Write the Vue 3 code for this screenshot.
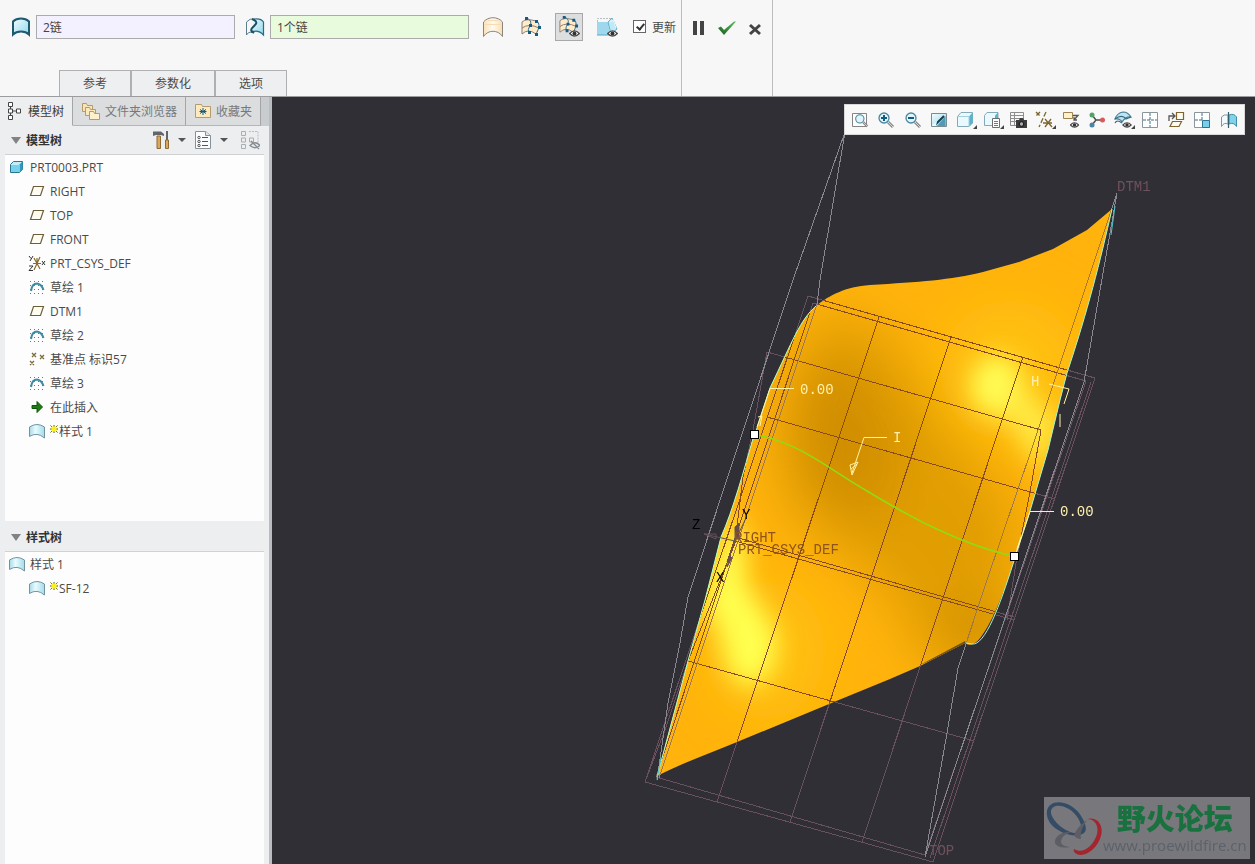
<template>
  <div class="app">
    <!-- Icon definitions -->
    <svg class="defs" width="0" height="0" aria-hidden="true">
      <defs>
        <linearGradient id="g-cyan" x1="0" y1="0" x2="1" y2="1">
          <stop offset="0" stop-color="#f4fdff" />
          <stop offset="1" stop-color="#8fd8ec" />
        </linearGradient>
        <linearGradient id="g-shell" x1="0" y1="0" x2="1" y2="0">
          <stop offset="0" stop-color="#a9d9e6" />
          <stop offset="0.4" stop-color="#e8fbff" />
          <stop offset="1" stop-color="#a5dcea" />
        </linearGradient>
        <linearGradient id="g-cream" x1="0" y1="0" x2="1" y2="0">
          <stop offset="0" stop-color="#fbe2b8" />
          <stop offset="0.5" stop-color="#fffaf0" />
          <stop offset="1" stop-color="#f9ddb0" />
        </linearGradient>
        <linearGradient id="g-check" x1="0" y1="1" x2="1" y2="0">
          <stop offset="0" stop-color="#1d5b24" />
          <stop offset="1" stop-color="#5ec05c" />
        </linearGradient>
      </defs>

      <symbol id="i-surface" viewBox="0 0 20 20">
        <path d="M2 17.500V4.500C6 .6 14 .6 18 4.500V17.500C14 13.500 6 13.500 2 17.500Z" fill="url(#g-cyan)" stroke="#1c5a70" stroke-width="2" />
      </symbol>
      <symbol id="i-inner" viewBox="0 0 20 20">
        <path d="M9 2Q15 1 18 5V18Q13 13 6 16Z" fill="url(#g-cyan)" />
        <path d="M1.500 18V5Q5 1 9 2M1.500 18Q3 15 6 15" fill="none" stroke="#5c7e8c" />
        <path d="M9 2Q16 1 18.500 5V18Q13 12 6 15.500" fill="none" stroke="#2b6b82" stroke-width="1.200" />
        <path d="M7 2C15 5 10 8 8 10C5 13 6 14 9 16" fill="none" stroke="#1c4f63" stroke-width="2" />
      </symbol>
      <symbol id="i-cream" viewBox="0 0 22 22">
        <path d="M1.500 20.500V6C6 .3 16 .3 20.500 6V20.500C16 13.500 6 13.500 1.500 20.500Z" fill="url(#g-cream)" stroke="#8b8580" />
        <path d="M6 4.500H16M3 8.500H19" stroke="#f6dcb4" />
      </symbol>
      <symbol id="i-net" viewBox="0 0 22 22">
        <path d="M2 18V6Q7 2 17 6L20 12L16 18Q9 12 2 18Z" fill="#fdebc9" />
        <path d="M2 18V6Q6 2 16 5M2 12Q9 7 19 12M2 18Q8 12 16 18" fill="none" stroke="#8b7f72" />
        <path d="M7 2C12 5 11 7 10 10C8 13 8 14 9 17M17 5C21 9 18 14 16 18" fill="none" stroke="#2d6a88" />
        <path d="M5 1h3v3h-3zM9 8h3v3h-3zM8 15h3v3h-3zM15 4h3v3h-3zM18 10h3v3h-3zM15 17h3v3h-3z" fill="#175a80" />
      </symbol>
      <symbol id="i-eye" viewBox="0 0 12 8">
        <path d="M.5 4Q6-2 11.500 4Q6 10 .5 4Z" fill="#fff" stroke="#484848" stroke-width="1.500" />
        <circle cx="6" cy="4" r="2.300" fill="#333" />
      </symbol>
      <symbol id="i-neteye" viewBox="0 0 22 22">
        <use href="#i-net" x="0" y="-1" width="21" height="21" />
        <use href="#i-eye" x="11" y="14" width="11" height="7" />
      </symbol>
      <symbol id="i-blend" viewBox="0 0 22 22">
        <path d="M1 6H12L14 19H1Z" fill="#9fd8ec" />
        <path d="M1.500 6V2.500H15" fill="none" stroke="#b9bec4" stroke-dasharray="2 1" />
        <path d="M12 6L16 2L21 13L15 18Z" fill="#bfe9f6" stroke="#5fb0cb" />
        <path d="M14 6L17 4L20 12" fill="none" stroke="#f2fcff" />
        <path d="M1 19H14" stroke="#5ba9c2" />
        <use href="#i-eye" x="11" y="14" width="11" height="7" />
      </symbol>
      <symbol id="i-tree" viewBox="0 0 16 20">
        <path d="M4.500 6v8M6 10h5" stroke="#444" fill="none" />
        <path d="M2.500 1.500h4v4h-4zM2.500 8h4v4h-4zM2.500 14.500h4v4h-4zM10.500 8h4v4h-4z" fill="#fff" stroke="#444" />
      </symbol>
      <symbol id="i-folders" viewBox="0 0 20 20">
        <path d="M1.500 2.500h4l1 2h5v6h-10z" fill="#f9e3b2" stroke="#b39b6c" />
        <path d="M4.500 6.500h4l1 2h5v6h-10z" fill="#fbe8bd" stroke="#b39b6c" />
        <path d="M8.500 10.500h4l1 2h5v6h-10z" fill="#fff1cd" stroke="#b39b6c" />
      </symbol>
      <symbol id="i-fav" viewBox="0 0 18 18">
        <path d="M1.500 2.500h6l1 2h8v11h-15z" fill="#fdeabf" stroke="#b39b6c" />
        <path d="M9 6v7M6 7.500l6 4M12 7.500l-6 4M5.500 9.500h7" stroke="#1c5a78" />
      </symbol>
      <symbol id="i-tools" viewBox="0 0 18 20">
        <path d="M5 6h3.500v12.500h-3.500z" fill="#d9a85d" stroke="#8c6b35" />
        <path d="M1 6V1.500H9L12 4V6L9 5H4Z" fill="#62666b" />
        <path d="M15 1v9" stroke="#62666b" stroke-width="2" />
        <path d="M13.500 10h3v8.500h-3z" fill="#d9a85d" stroke="#8c6b35" />
      </symbol>
      <symbol id="i-list" viewBox="0 0 18 20">
        <path d="M1.500 1.500h10l5 4v13h-15z" fill="#fcfdfe" stroke="#87919a" />
        <path d="M11.500 1.500v4h5" fill="#dfe5ea" stroke="#87919a" />
        <path d="M8 7.500h6M8 11.500h6M8 15.500h6" stroke="#555" />
        <circle cx="5" cy="7.500" r="1.200" fill="none" stroke="#555" />
        <circle cx="5" cy="11.500" r="1.200" fill="none" stroke="#555" />
        <circle cx="5" cy="15.500" r="1.200" fill="none" stroke="#555" />
      </symbol>
      <symbol id="i-hide" viewBox="0 0 20 20">
        <path d="M1.500 1.500h4v4h-4zM1.500 8h4v4h-4zM1.500 14.500h4v4h-4zM9.500 8h4v4h-4z" fill="none" stroke="#a9aeb2" />
        <path d="M9 1.500h9v12" fill="none" stroke="#b8bdc1" stroke-dasharray="2 1" />
        <path d="M10 15.500Q15 10 20 15.500Q15 20 10 15.500ZM11 11l8 8" fill="none" stroke="#878d92" stroke-width="1.300" />
      </symbol>
      <symbol id="i-part" viewBox="0 0 16 16">
        <path d="M1.500 5.500L4.500 2.500H13.500V10.500L10.500 13.500H1.500Z" fill="#c3eef9" stroke="#2a7690" />
        <path d="M10.500 5.500L13.500 2.500V10.500L10.500 13.500Z" fill="#2f9cbc" />
        <path d="M2 6h8.500v7h-8.500z" fill="#76d2ec" />
      </symbol>
      <symbol id="i-plane" viewBox="0 0 16 16">
        <path d="M4.500 3.500H14.500L11.500 12.500H1.500Z" fill="#fffdf2" stroke="#6e5e3a" stroke-width="1.200" />
      </symbol>
      <symbol id="i-csys" viewBox="0 0 18 16">
        <path d="M5 8.500h8M6 3l6 11M12 2L6 15M9 3v5" stroke="#8a6d2c" stroke-width="1.200" fill="none" />
        <path d="M1 1l2 2.500M5 1L2 6M1 11h4L1 15.500h4M14 6l3 4M17 6l-3 4" stroke="#333" fill="none" />
      </symbol>
      <symbol id="i-sketch" viewBox="0 0 16 16">
        <path d="M1 2.500h15M1 6.500h15M1 10.500h15M1 14.500h15" stroke="#3c87ad" stroke-dasharray="1 3" />
        <path d="M2 12Q3 4.500 8 4.500Q12.500 5 14.500 11" fill="none" stroke="#3f8aa5" stroke-width="2" />
      </symbol>
      <symbol id="i-points" viewBox="0 0 16 16">
        <path d="M3 2l4 4M7 2l-4 4M11 4l4 4M15 4l-4 4M1 10l4 4M5 10l-4 4" stroke="#7b6a35" stroke-width="1.300" />
      </symbol>
      <symbol id="i-insert" viewBox="0 0 16 16">
        <path d="M3 6.500h5V2.500L13.500 8L8 13.500V9.500H3Z" fill="#1f7a14" stroke="#0e5608" />
      </symbol>
      <symbol id="i-style" viewBox="0 0 18 16">
        <path d="M1.500 13.500V4Q9-1 16.500 4V15Q9 8.500 1.500 13.500Z" fill="url(#g-shell)" stroke="#70949f" />
      </symbol>
      <symbol id="i-new" viewBox="0 0 8 8">
        <path d="M4 0v8M0 4h8M.5.5l7 7M7.500.5L.5 7.500" stroke="#55550a" />
        <path d="M1.500 1.500h5v5h-5z" fill="#fbf21c" />
      </symbol>

      <symbol id="i-lens" viewBox="0 0 18 18">
        <path d="M11 11l5 5" stroke="#888" stroke-width="3" />
        <path d="M11 11l5 5" stroke="#d9d9d9" stroke-width="1" />
        <circle cx="7" cy="7" r="5" fill="#dff5fb" stroke="#4a87a0" stroke-width="1.300" />
      </symbol>
      <symbol id="v-fit" viewBox="0 0 18 18">
        <path d="M1.500 2.500h14v13h-14z" fill="#fff" stroke="#848484" />
        <use href="#i-lens" x="3" y="2" width="15" height="15" />
      </symbol>
      <symbol id="v-in" viewBox="0 0 18 18">
        <use href="#i-lens" width="18" height="18" />
        <path d="M4 7h6M7 4v6" stroke="#15597c" stroke-width="2" />
      </symbol>
      <symbol id="v-out" viewBox="0 0 18 18">
        <use href="#i-lens" width="18" height="18" />
        <path d="M4 7h6" stroke="#15597c" stroke-width="2" />
      </symbol>
      <symbol id="v-repaint" viewBox="0 0 18 18">
        <path d="M1.500 2.500h15v13h-15z" fill="url(#g-cyan)" stroke="#7b8b92" />
        <path d="M7 15L15.500 5V15Z" fill="#4f9cb6" />
        <path d="M5 14L14 5" stroke="#123c50" stroke-width="2" />
        <path d="M2 14L7 10L6 15H2Z" fill="#e8f8fd" />
      </symbol>
      <symbol id="v-shade" viewBox="0 0 18 18">
        <path d="M1.500 5.500L5 1.500H16.500V12L13 15.500H1.500Z" fill="#e9f9fd" stroke="#83aab8" />
        <path d="M13 5.500L16.500 1.500V12L13 15.500Z" fill="#57b4cf" />
        <path d="M1.500 5.500H13V15.500" fill="none" stroke="#a5cfdb" />
      </symbol>
      <symbol id="v-saved" viewBox="0 0 18 18">
        <path d="M1.500 4.500L4 1.500H15V12L12 14.500H1.500Z" fill="#e9f9fd" stroke="#83aab8" />
        <path d="M12 4.500L15 1.500V8H12Z" fill="#57b4cf" />
        <path d="M9.500 7.500h7v9h-7z" fill="#fff" stroke="#6d6d6d" />
        <path d="M11 10.500h4M11 12.500h4M11 14.500h4" stroke="#777" />
      </symbol>
      <symbol id="v-camera" viewBox="0 0 18 18">
        <path d="M1.500 1.500h13v13h-13zM1.500 4.500h13M1.500 7.500h13M1.500 10.500h13M5.500 1.500v13" fill="none" stroke="#8d8d8d" />
        <path d="M7 9h3l1-2h3l1 2h3v8h-11z" fill="#3c3c3c" />
        <circle cx="12.500" cy="13" r="2.300" fill="#aaa" stroke="#111" />
      </symbol>
      <symbol id="v-datum" viewBox="0 0 18 18">
        <path d="M1 1l4 4M5 1l-4 4M11 1L4 16" fill="none" stroke="#7c652c" stroke-width="1.300" stroke-dasharray="5 2" />
        <path d="M10 8l7 8M16 8l-6 8M8 12h9" fill="none" stroke="#7c652c" stroke-width="1.300" />
      </symbol>
      <symbol id="v-note" viewBox="0 0 18 18">
        <path d="M1.500 1.500h9v6h-9z" fill="#fdf0cc" stroke="#9b8250" />
        <path d="M11 4.500h5L12 9M12 6v3h3" fill="none" stroke="#555" stroke-width="1.300" />
        <use href="#i-eye" x="8" y="11" width="9" height="6" />
      </symbol>
      <symbol id="v-spin" viewBox="0 0 18 18">
        <path d="M4 4l4 5L4 14M8 9h7" fill="none" stroke="#4d4d4d" stroke-width="1.500" />
        <circle cx="4" cy="4" r="2.500" fill="#53a166" />
        <circle cx="4" cy="14" r="2.500" fill="#4b83a3" />
        <circle cx="14.500" cy="9" r="2.500" fill="#d65c5c" />
      </symbol>
      <symbol id="v-style" viewBox="0 0 18 18">
        <path d="M1 8Q3 2 9 1Q14 1 17 6Q12 5 8 11Q6 7 1 8Z" fill="#bde5f1" stroke="#497f96" stroke-width="1.200" />
        <path d="M1 8Q8 3 12 8L17 6M1 12Q3 8 8 12" fill="none" stroke="#36657d" stroke-width="1.200" />
        <use href="#i-eye" x="8" y="11" width="10" height="6" />
      </symbol>
      <symbol id="v-four" viewBox="0 0 18 18">
        <path d="M1.500 1.500h15v15h-15z" fill="#fff" stroke="#8b969c" />
        <path d="M9 2v14M2 9h14" stroke="#35718e" stroke-dasharray="3 1" />
      </symbol>
      <symbol id="v-normal" viewBox="0 0 18 18">
        <path d="M9.500 1.500h7v7h-7zM5.500 10.500h9L12 15.500H3Z" fill="#fffbee" stroke="#80642f" stroke-width="1.200" />
        <path d="M2 10V5H7M5 2l3 3l-3 3" fill="none" stroke="#555" stroke-width="1.300" />
      </symbol>
      <symbol id="v-active" viewBox="0 0 18 18">
        <path d="M1.500 1.500h15v15h-15z" fill="#fff" stroke="#8b969c" />
        <path d="M9 2v7M2 9h7" stroke="#35718e" stroke-dasharray="3 1" />
        <path d="M9.500 9.500h7v7h-7z" fill="#78cfea" stroke="#2c7693" />
      </symbol>
      <symbol id="v-mirror" viewBox="0 0 18 18">
        <path d="M1.500 15.500V6Q4 3 8 4V13Q4 11 1.500 15.500Z" fill="#f1fafc" stroke="#83949b" />
        <path d="M9 4Q14 2 16.500 6V15.500Q14 11 9 13Z" fill="#7fd3eb" stroke="#438da8" />
        <path d="M8.500 1v16" stroke="#375e6d" stroke-width="1.200" />
      </symbol>
    </svg>

    <header class="dashboard">
      <section class="feature">
        <div class="controls">
          <svg class="ic20"><use href="#i-surface" /></svg>
          <input v-model="primary" class="collector" type="text" aria-label="主链" />
          <svg class="ic20 gap-lg"><use href="#i-inner" /></svg>
          <input v-model="internal" class="collector active" type="text" aria-label="内部链" />
          <div class="toggles">
            <button
              v-for="t in toggles"
              :key="t.icon"
              type="button"
              class="toggle"
              :class="{ on: t.on }"
              :aria-label="t.label"
              @click="t.on = !t.on"
            >
              <svg class="ic22"><use :href="'#' + t.icon" /></svg>
            </button>
          </div>
          <label class="update"><input v-model="update" type="checkbox" />更新</label>
        </div>
        <nav class="slide-tabs">
          <button v-for="s in slideUps" :key="s" type="button">{{ s }}</button>
        </nav>
      </section>
      <section class="confirm">
        <button type="button" aria-label="暂停">
          <svg width="14" height="16" viewBox="0 0 14 16"><path d="M1 1h4v14h-4zM8 1h4v14h-4z" fill="#444" /></svg>
        </button>
        <button type="button" aria-label="确定">
          <svg width="20" height="16" viewBox="0 0 20 16"><path d="M1 8L4 6.500L7 10L17 1.500H19L7 15Z" fill="url(#g-check)" /></svg>
        </button>
        <button type="button" aria-label="取消">
          <svg width="14" height="16" viewBox="0 0 14 16"><path d="M2 5L12 14M12 5L2 14" stroke="#444" stroke-width="3" /></svg>
        </button>
      </section>
    </header>

    <div class="workspace">
      <aside class="navigator">
        <nav class="nav-tabs">
          <button type="button" class="tab current"><svg class="tab-tree"><use href="#i-tree" /></svg>模型树</button>
          <button type="button" class="tab"><svg class="ic20"><use href="#i-folders" /></svg>文件夹浏览器</button>
          <button type="button" class="tab"><svg class="ic18"><use href="#i-fav" /></svg>收藏夹</button>
        </nav>
        <div class="panel">
          <div class="panel-title">
            <span class="arrow"></span>
            <h2>模型树</h2>
            <div class="panel-tools">
              <button type="button" aria-label="设置"><svg class="tool"><use href="#i-tools" /></svg><i class="caret"></i></button>
              <button type="button" aria-label="显示"><svg class="tool"><use href="#i-list" /></svg><i class="caret"></i></button>
              <button type="button" aria-label="隐藏"><svg class="tool wide"><use href="#i-hide" /></svg></button>
            </div>
          </div>
          <ul class="tree model">
            <li v-for="(n, i) in modelTree" :key="i" :class="{ child: i > 0 }">
              <svg class="node"><use :href="'#i-' + n.icon" /></svg>
              <svg v-if="n.fresh" class="fresh"><use href="#i-new" /></svg>
              <span>{{ n.name }}</span>
            </li>
          </ul>
          <div class="panel-title lower">
            <span class="arrow"></span>
            <h2>样式树</h2>
          </div>
          <ul class="tree style">
            <li v-for="(n, i) in styleTree" :key="i" :class="{ child: i > 0 }">
              <svg class="node"><use href="#i-style" /></svg>
              <svg v-if="n.fresh" class="fresh"><use href="#i-new" /></svg>
              <span>{{ n.name }}</span>
            </li>
          </ul>
        </div>
      </aside>

      <main class="viewport">
        <svg class="scene" viewBox="272 97 983 767" preserveAspectRatio="xMinYMin slice" role="img" aria-label="SF-12">
          <defs>
            <clipPath id="surf-clip"><path :d="surface" /></clipPath>
            <filter id="soft" x="-100%" y="-100%" width="300%" height="300%"><feGaussianBlur stdDeviation="12" /></filter>
            <filter id="softer" x="-100%" y="-100%" width="300%" height="300%"><feGaussianBlur stdDeviation="26" /></filter>
            <g id="grid" fill="none">
              <path d="M808 296L1095 378L933 862L645 782ZM813 303L1086 381L925 855L656 777Z" />
              <path d="M879 317L717 802M951 337L790 822M1023 357L862 842" />
              <path d="M767 352L1041 430M767 417L1055 499M735 537L1014 617M735 541L1014 620M688 661L974 741" />
              <path d="M767 352L753 430L743 477L735 543L688 661L665 730L645 782" />
              <path d="M1041 430L1030 492L1016 563L1007 620M1091 382L930 858" />
            </g>
            <g id="wires" fill="none">
              <path d="M845 132L793 280L688 597L680 643L668 703L657 780" />
              <path d="M845 132L820 280L817 304L659 778" />
              <path d="M1117 193L1058 370L1032 448L987 580L958 668L947 733L925 857" />
              <path d="M1117 193L1084 382L925 857" />
            </g>
          </defs>

          <g shape-rendering="crispEdges">
            <use href="#grid" stroke="#68505e" />
            <use href="#wires" stroke="#898792" />
          </g>

          <path :d="surface" fill="#ffb30c" />
          <g clip-path="url(#surf-clip)">
            <g filter="url(#softer)">
              <path d="M806 330L850 312L900 350L950 430L1010 500L1020 570L985 660L930 670L890 590L790 510L775 440Z" fill="#dc9a06" opacity=".85" />
              <ellipse cx="845" cy="440" rx="45" ry="80" fill="#c48403" opacity=".6" transform="rotate(-15 845 440)" />
              <ellipse cx="985" cy="635" rx="35" ry="24" fill="#c48403" opacity=".8" />
              <ellipse cx="1010" cy="370" rx="70" ry="70" fill="#ffc60e" opacity=".7" />
              <ellipse cx="765" cy="650" rx="60" ry="70" fill="#ffc60e" opacity=".7" />
            </g>
            <g filter="url(#soft)">
              <ellipse cx="997" cy="386" rx="26" ry="30" fill="#ffff58" />
              <path d="M990 385L1015 380L1060 420L1042 475L1022 445Z" fill="#fff04a" opacity=".85" />
              <path d="M728 540L744 580L778 635L774 670L748 690L728 670L716 620L712 570Z" fill="#ffff50" />
              <path d="M738 510L748 560L740 610L700 620L720 540Z" fill="#ffff50" opacity=".9" />
            </g>
            <path d="M920 665L965 641L966 646Z" fill="#705010" />
            <g shape-rendering="crispEdges">
              <use href="#grid" stroke="#864a1e" />
              <use href="#wires" stroke="#a07840" />
            </g>
          </g>

          <!-- boundary chains -->
          <g fill="none">
            <path d="M816 306C800 320 793 340 770 388C762 412 757 430 754 435C744 470 733 510 721 537L705 600L688 661L657 777" stroke="#b4ffc4" />
            <path d="M1112 209C1100 262 1088 310 1067 373L1060 400L1048 450L1030 511L1013 564C1000 605 985 646 972 644L966 643" stroke="#a6f5c6" />
            <path d="M1115 206L1111 235M657 780L661 758" stroke="#53c6ce" />
            <path d="M757 435C800 443 830 470 867 491C910 517 960 544 1012 556" stroke="#8edc14" stroke-width="1.500" />
          </g>

          <!-- dimension leaders -->
          <g fill="none" stroke="#fff2a6">
            <path d="M794 388.500H770L757 427M758 417l4-1l-2 10M887 437.500H864L852 473M858 462l-8 3l2 10ZM857 464l-6 5M1054 511.500H1030L1016 553M1021 537l-4 12M1049 384L1069 389L1064 404M1060 414v13" />
          </g>
          <g fill="none" stroke="#665058">
            <path d="M704 534L735 541L746 518M735 541L727 562M704 534l12 0l0 5Z" />
            <path d="M735 527l4-4v16h-4zM730 556l2 2l-5 9z" fill="#6c4b45" />
          </g>

          <g class="handle">
            <rect x="750.500" y="430.500" width="8" height="8" />
            <rect x="1010.500" y="552.500" width="8" height="8" />
          </g>

          <g class="labels">
            <text v-for="l in labels" :key="l.text + l.x" :x="l.x" :y="l.y" :class="l.tone">{{ l.text }}</text>
          </g>
        </svg>

        <div class="view-bar">
          <button v-for="v in viewTools" :key="v.icon" type="button" :aria-label="v.label" :class="{ more: v.more }">
            <svg class="ic18"><use :href="'#v-' + v.icon" /></svg>
          </button>
        </div>

        <div class="watermark">
          <svg width="58" height="58" viewBox="0 0 58 58">
            <path fill-rule="evenodd" d="M2 12C4-1 24 1 34 14C40 22 43 31 39 34C32 40 12 34 5 24Q1 18 2 12ZM6 12C5 19 17 32 29 34C38 35 38 28 33 19C26 7 8 2 6 12Z" fill="#344c66" />
            <path d="M42 20C52 17 59 26 56 37C52 51 38 60 30 54Q28 52 29 50C38 56 49 46 52 35C54 27 50 20 42 20Z" fill="#a3262f" />
            <path d="M26 33C16 32 9 38 10 44Q13 50 25 48Q15 47 16 42Q17 36 26 33ZM29 36Q32 28 42 21Q34 32 36 40Q31 40 29 36Z" fill="#5d5d65" />
          </svg>
          <div class="brand">
            <strong>野火论坛</strong>
            <span>www.proewildfire.cn</span>
          </div>
        </div>
      </main>
    </div>
  </div>
</template>

<script setup>
import { ref } from 'vue'

const primary = ref('2链')
const internal = ref('1个链')
const update = ref(true)

const toggles = ref([
  { icon: 'i-cream', label: '曲面', on: false },
  { icon: 'i-net', label: '网格', on: false },
  { icon: 'i-neteye', label: '显示网格', on: true },
  { icon: 'i-blend', label: '显示连接', on: false }
])

const slideUps = ['参考', '参数化', '选项']

const modelTree = [
  { icon: 'part', name: 'PRT0003.PRT' },
  { icon: 'plane', name: 'RIGHT' },
  { icon: 'plane', name: 'TOP' },
  { icon: 'plane', name: 'FRONT' },
  { icon: 'csys', name: 'PRT_CSYS_DEF' },
  { icon: 'sketch', name: '草绘 1' },
  { icon: 'plane', name: 'DTM1' },
  { icon: 'sketch', name: '草绘 2' },
  { icon: 'points', name: '基准点 标识57' },
  { icon: 'sketch', name: '草绘 3' },
  { icon: 'insert', name: '在此插入' },
  { icon: 'style', name: '样式 1', fresh: true }
]

const styleTree = [
  { name: '样式 1' },
  { name: 'SF-12', fresh: true }
]

const viewTools = [
  { icon: 'fit', label: '重新调整' },
  { icon: 'in', label: '放大' },
  { icon: 'out', label: '缩小' },
  { icon: 'repaint', label: '重画' },
  { icon: 'shade', label: '显示样式', more: true },
  { icon: 'saved', label: '已保存方向', more: true },
  { icon: 'camera', label: '视图管理器' },
  { icon: 'datum', label: '基准显示', more: true },
  { icon: 'note', label: '注释显示' },
  { icon: 'spin', label: '旋转中心' },
  { icon: 'style', label: '样式显示', more: true },
  { icon: 'four', label: '四视图' },
  { icon: 'normal', label: '活动平面方向' },
  { icon: 'active', label: '活动视图' },
  { icon: 'mirror', label: '镜像' }
]

const surface =
  'M1112 209L1087 230L1053 249L1019 262L983 272C950 280 920 282 870 285C845 287 830 295 816 306' +
  'C800 320 793 340 770 388C762 412 757 430 754 435C744 470 733 510 721 537L705 600L688 661L657 776' +
  'C680 764 710 753 737 742L829 704L890 679L920 666L965 643Q972 648 980 638Q996 617 1013 564' +
  'L1030 511L1048 450L1060 400L1067 373C1088 310 1100 262 1112 209Z'

const labels = [
  { text: 'DTM1', x: 1117, y: 191, tone: 'datum' },
  { text: 'TOP', x: 929, y: 855, tone: 'datum' },
  { text: 'RIGHT', x: 734, y: 542, tone: 'onface' },
  { text: 'PRT_CSYS_DEF', x: 738, y: 554, tone: 'onface' },
  { text: '0.00', x: 800, y: 394, tone: 'dim' },
  { text: '0.00', x: 1060, y: 516, tone: 'dim' },
  { text: 'I', x: 893, y: 442, tone: 'dim' },
  { text: 'H', x: 1031, y: 386, tone: 'dim' },
  { text: 'Z', x: 692, y: 529, tone: 'axis' },
  { text: 'Y', x: 742, y: 519, tone: 'axis' },
  { text: 'X', x: 716, y: 582, tone: 'axis' }
]
</script>

<style>
body {
  margin: 0;
  background: #f7f7f7;
}
</style>

<style scoped>
.app {
  display: flex;
  flex-direction: column;
  min-height: 100vh;
  font-family: "Open Sans", "Noto Sans CJK SC", sans-serif;
  font-size: 12px;
  color: #4a4a4a;
}
.defs {
  position: absolute;
}
button {
  padding: 0;
  border: 0;
  background: none;
  font: inherit;
  color: inherit;
  cursor: pointer;
}
svg {
  display: block;
  flex: none;
}
.ic18 {
  width: 18px;
  height: 18px;
}
.ic20 {
  width: 20px;
  height: 20px;
}
.ic22 {
  width: 22px;
  height: 22px;
}

/* Dashboard */
.dashboard {
  display: flex;
  background: #f7f7f7;
  border-bottom: 1px solid #9c9c9e;
}
.feature {
  display: flex;
  flex-direction: column;
  justify-content: space-between;
  gap: 29px;
  padding-top: 12px;
  padding-right: 5px;
  border-right: 1px solid #bdbdbd;
}
.controls {
  display: flex;
  align-items: center;
  gap: 5px;
  height: 29px;
  padding-left: 11px;
}
.gap-lg {
  margin-left: 5px;
}
.collector {
  box-sizing: border-box;
  width: 199px;
  height: 24px;
  padding: 0 6px;
  border: 1px solid #ababab;
  background: #f3f0ff;
  font: inherit;
  color: #444;
}
.collector.active {
  background: #e8fbdc;
}
.toggles {
  display: flex;
  gap: 10px;
  padding-left: 5px;
}
.toggle {
  display: flex;
  align-items: center;
  justify-content: center;
  width: 28px;
  height: 28px;
  box-sizing: border-box;
  border: 1px solid transparent;
}
.toggle.on {
  background: #dcdee0;
  border-color: #a8a8a8;
}
.update {
  display: flex;
  align-items: center;
  gap: 6px;
  padding-left: 7px;
}
.update input {
  appearance: none;
  position: relative;
  width: 13px;
  height: 13px;
  margin: 0;
  border: 1px solid #666;
  background: #fff;
  box-sizing: border-box;
}
.update input:checked::after {
  content: "";
  position: absolute;
  left: 4px;
  top: 1px;
  width: 3px;
  height: 6px;
  border: solid #333;
  border-width: 0 2px 2px 0;
  transform: rotate(40deg);
}
.slide-tabs {
  display: flex;
  padding-left: 59px;
}
.slide-tabs button {
  height: 26px;
  padding: 0 23px 2px;
  border: 1px solid #b0b0b2;
  border-bottom: 0;
  background: #eeeff1;
}
.confirm {
  display: flex;
  align-items: center;
  align-self: stretch;
  gap: 11px;
  padding: 0 10px 40px;
  border-right: 1px solid #bdbdbd;
}

/* Navigator */
.workspace {
  display: flex;
  flex: 1;
}
.navigator {
  display: flex;
  flex-direction: column;
  flex: none;
  width: 269px;
  background: #eceef0;
  border-right: 3px solid #b9bcc0;
}
.nav-tabs {
  display: flex;
  height: 29px;
  background: #c9ccce;
}
.tab {
  display: flex;
  align-items: center;
  gap: 4px;
  padding: 0 8px;
  border-right: 1px solid #a3a6a8;
  border-bottom: 1px solid #b4b7b9;
  background: #dbdddf;
  color: #77797b;
}
.tab.current {
  padding-left: 6px;
  gap: 6px;
  background: #eceef0;
  border-bottom-color: #eceef0;
  color: #3c3c3c;
}
.tab-tree {
  width: 16px;
  height: 20px;
}
.panel {
  display: flex;
  flex-direction: column;
  flex: 1;
  padding: 0 5px;
}
.panel-title {
  display: flex;
  align-items: center;
  gap: 5px;
  height: 28px;
  padding-left: 6px;
  border-bottom: 1px solid #cfd1d3;
}
.panel-title.lower {
  padding-top: 2px;
}
.panel-title h2 {
  margin: 0;
  font-size: 12px;
  font-weight: 700;
  color: #333;
}
.arrow {
  border: 5px solid transparent;
  border-top: 7px solid #808284;
  border-bottom: 0;
}
.panel-tools {
  display: flex;
  gap: 8px;
  margin-left: auto;
  padding-right: 4px;
}
.panel-tools button {
  display: flex;
  align-items: center;
  gap: 8px;
}
.panel-tools button + button + button {
  margin-left: 4px;
}
.tool {
  width: 18px;
  height: 20px;
}
.tool.wide {
  width: 20px;
}
.caret {
  border: 4px solid transparent;
  border-top-color: #555;
  border-bottom: 0;
}
.tree {
  margin: 0;
  padding: 0;
  list-style: none;
  background: #fdfdfd;
}
.tree.model {
  padding-bottom: 78px;
}
.tree.style {
  flex: 1;
}
.tree li {
  display: flex;
  align-items: center;
  height: 24px;
  padding-left: 3px;
}
.tree li.child {
  padding-left: 23px;
}
.node {
  width: 18px;
  height: 16px;
  margin-right: 4px;
}
.fresh {
  width: 8px;
  height: 8px;
  margin: -4px 1px 0 0;
}

/* Graphics area */
.viewport {
  position: relative;
  flex: 1;
  min-width: 0;
  overflow: hidden;
  background: #302f36;
}
.scene {
  width: 100%;
  height: 100%;
}
.handle rect {
  fill: #fff;
  stroke: #000;
}
.labels {
  font-family: "Liberation Mono", monospace;
  font-size: 14px;
}
.datum {
  fill: #70515b;
}
.onface {
  fill: #8f551c;
}
.dim {
  fill: #fff0ac;
}
.axis {
  fill: #000;
}
.view-bar {
  position: absolute;
  top: 7px;
  right: 10px;
  display: flex;
  justify-content: space-between;
  box-sizing: border-box;
  width: 401px;
  height: 31px;
  padding: 0 2px;
  background: #f8f8f8;
  border: 1px solid #d8d8d8;
}
.view-bar button {
  display: flex;
  align-items: center;
  justify-content: center;
  position: relative;
  width: 26px;
}
.view-bar .more::after {
  content: "";
  position: absolute;
  right: 1px;
  bottom: 5px;
  border-left: 4px solid transparent;
  border-bottom: 4px solid #444;
}
.watermark {
  position: absolute;
  right: 5px;
  bottom: 5px;
  display: flex;
  align-items: center;
  box-sizing: border-box;
  width: 206px;
  height: 62px;
  padding-left: 1px;
  background: #78777c;
}
.brand {
  display: flex;
  flex-direction: column;
  align-items: center;
  white-space: nowrap;
}
.brand strong {
  font-family: "Noto Sans CJK SC", sans-serif;
  font-size: 29px;
  font-weight: 900;
  line-height: 34px;
  color: #19713f;
}
.brand span {
  font-size: 15px;
  line-height: 22px;
  color: #5b626b;
}
</style>
